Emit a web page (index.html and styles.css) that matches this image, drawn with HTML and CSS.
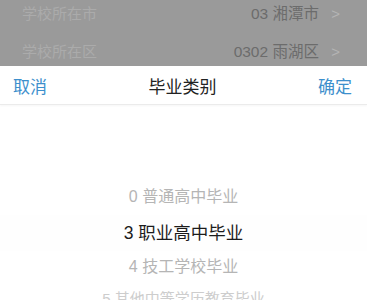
FILE: index.html
```html
<!DOCTYPE html>
<html lang="zh-CN">
<head>
  <meta charset="UTF-8">
  <meta name="viewport" content="width=device-width, initial-scale=1.0">
  <title>毕业类别</title>
  <link rel="stylesheet" href="styles.css">
</head>
<body>
  <div class="backdrop">
    <div class="form-list">
      <div class="form-row">
        <span class="row-label">学校所在市</span>
        <span class="row-value">03 湘潭市 <span class="chevron">&gt;</span></span>
      </div>
      <div class="form-row">
        <span class="row-label">学校所在区</span>
        <span class="row-value">0302 雨湖区 <span class="chevron">&gt;</span></span>
      </div>
    </div>
  </div>

  <div class="sheet">
    <div class="sheet-header">
      <span class="action">取消</span>
      <span class="sheet-title">毕业类别</span>
      <span class="action">确定</span>
    </div>

    <div class="picker">
      <div class="picker-item">0 普通高中毕业</div>
      <div class="picker-item selected">3 职业高中毕业</div>
      <div class="picker-item near">4 技工学校毕业</div>
      <div class="picker-item far">5 其他中等学历教育毕业</div>
    </div>
  </div>
</body>
</html>
```

FILE: styles.css
```css
body {
  margin: 0;
  padding: 0;
  width: 367px;
  height: 300px;
  overflow: hidden;
  font-family: "Liberation Sans", "Noto Sans CJK SC", sans-serif;
  background-color: #fff;
}

.backdrop {
  height: 66px;
  background-color: #9a9a9a;
  overflow: hidden;
}

.form-list {
  margin-top: -7px;
}

.form-row {
  height: 38px;
  display: flex;
  align-items: center;
  justify-content: space-between;
  padding: 0 27px 0 22px;
  font-size: 15px;
}

.row-label {
  color: #ababab;
}

.row-value {
  color: #6c6c6c;
  font-size: 15.5px;
}

.chevron {
  color: #b4b4b4;
  margin-left: 8px;
  font-size: 15px;
}

.sheet {
  background-color: #fff;
}

.sheet-header {
  height: 38px;
  display: flex;
  align-items: center;
  justify-content: space-between;
  padding: 0 15px 0 13px;
  border-bottom: 1px solid #ebebeb;
  box-shadow: 0 1px 2px rgba(0, 0, 0, 0.04);
}

.action {
  color: #3d8fcc;
  font-size: 17px;
}

.sheet-title {
  color: #222;
  font-size: 17px;
}

.picker {
  padding-top: 74px;
  text-align: center;
}

.picker-item {
  height: 36px;
  line-height: 36px;
  font-size: 16px;
  color: #b5b5b5;
}

.picker-item.selected {
  font-size: 17.5px;
  color: #1c1c1c;
  background-color: #fefefe;
}

.picker-item.near {
  height: 32px;
  line-height: 32px;
}

.picker-item.far {
  height: 32px;
  line-height: 32px;
  font-size: 15px;
  color: #cdcdcd;
}
```
